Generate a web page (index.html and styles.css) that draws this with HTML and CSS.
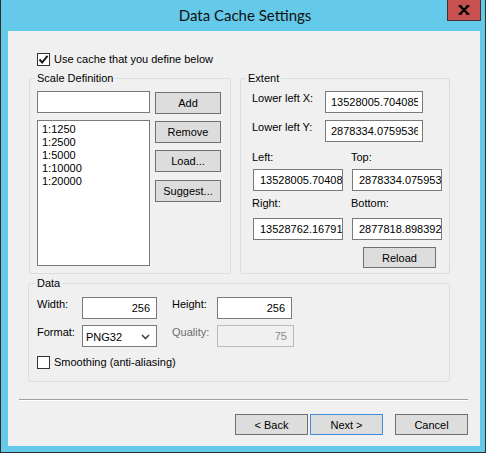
FILE: index.html
```html
<!DOCTYPE html>
<html lang="en">
<head>
    <meta charset="UTF-8">
    <title>Data Cache Settings</title>
    <link rel="stylesheet" href="styles.css">
</head>
<body>
    <div class="window">
        <div class="titlebar">
            <span class="title">Data Cache Settings</span>
            <button class="close-btn" aria-label="Close">
                <svg width="12" height="10" viewBox="0 0 12 10">
                    <path d="M2 1 L10 9 M10 1 L2 9" stroke="#000" stroke-width="2.4" fill="none"/>
                    <path d="M0.5 1 H4 M8 1 H11.5 M0.5 9 H4 M8 9 H11.5" stroke="#000" stroke-width="1.6" fill="none"/>
                </svg>
            </button>
        </div>
        <div class="client">
            <label class="check use-cache">
                <span class="box">
                    <svg width="11" height="11" viewBox="0 0 11 11">
                        <path d="M1.5 5.5 L4.2 8.5 L9.5 1.8" stroke="#1a1a1a" stroke-width="2" fill="none"/>
                    </svg>
                </span>
                Use cache that you define below
            </label>

            <div class="groups">
                <fieldset class="group scale">
                    <legend>Scale Definition</legend>
                    <div class="scale-body">
                        <div class="scale-left">
                            <input class="field scale-input" type="text" value="">
                            <div class="listbox">
                                <div>1:1250</div>
                                <div>1:2500</div>
                                <div>1:5000</div>
                                <div>1:10000</div>
                                <div>1:20000</div>
                            </div>
                        </div>
                        <div class="scale-buttons">
                            <button class="btn">Add</button>
                            <button class="btn">Remove</button>
                            <button class="btn">Load...</button>
                            <button class="btn suggest">Suggest...</button>
                        </div>
                    </div>
                </fieldset>

                <fieldset class="group extent">
                    <legend>Extent</legend>
                    <div class="ext-row">
                        <span class="lbl ext-lbl">Lower left X:</span>
                        <input class="field ext-input" type="text" value="13528005.7040859">
                    </div>
                    <div class="ext-row second">
                        <span class="lbl ext-lbl">Lower left Y:</span>
                        <input class="field ext-input" type="text" value="2878334.07595362">
                    </div>
                    <div class="ext-grid">
                        <span class="lbl">Left:</span>
                        <span class="lbl">Top:</span>
                        <input class="field" type="text" value="13528005.70408">
                        <input class="field" type="text" value="2878334.075953">
                        <span class="lbl lower">Right:</span>
                        <span class="lbl lower">Bottom:</span>
                        <input class="field" type="text" value="13528762.16791">
                        <input class="field" type="text" value="2877818.898392">
                    </div>
                    <div class="reload-row">
                        <button class="btn reload">Reload</button>
                    </div>
                </fieldset>
            </div>

            <fieldset class="group data">
                <legend>Data</legend>
                <div class="data-row">
                    <span class="lbl data-lbl">Width:</span>
                    <input class="field num" type="text" value="256">
                    <span class="lbl data-lbl second-col">Height:</span>
                    <input class="field num" type="text" value="256">
                </div>
                <div class="data-row format-row">
                    <span class="lbl data-lbl">Format:</span>
                    <div class="combo">
                        <span>PNG32</span>
                        <svg width="9" height="6" viewBox="0 0 9 6">
                            <path d="M1 1 L4.5 4.5 L8 1" stroke="#444" stroke-width="1.6" fill="none"/>
                        </svg>
                    </div>
                    <span class="lbl data-lbl second-col disabled">Quality:</span>
                    <input class="field num quality" type="text" value="75" disabled>
                </div>
                <label class="check smoothing">
                    <span class="box"></span>
                    Smoothing (anti-aliasing)
                </label>
            </fieldset>

            <div class="separator"></div>

            <div class="footer">
                <button class="btn nav">&lt; Back</button>
                <button class="btn nav default">Next &gt;</button>
                <button class="btn nav cancel">Cancel</button>
            </div>
        </div>
    </div>
</body>
</html>
```

FILE: styles.css
```css
body {
    margin: 0;
    background-color: #fff;
    font-family: "Liberation Sans", Arial, sans-serif;
    font-size: 11px;
    color: #000;
}

.window {
    width: 486px;
    height: 453px;
    box-sizing: border-box;
    background-color: #65c9ea;
    border: 1px solid #2e2e2e;
    border-top: 0;
    padding: 0 5px 6px 7px;
    display: flex;
    flex-direction: column;
}

.titlebar {
    height: 31px;
    position: relative;
    display: flex;
    justify-content: center;
    align-items: center;
}

.title {
    font-family: Lato, "Noto Sans", sans-serif;
    font-size: 15px;
    color: #111;
    margin-left: 2px;
    margin-top: -1px;
}

.close-btn {
    position: absolute;
    top: 0;
    right: -1px;
    width: 34px;
    height: 21px;
    box-sizing: border-box;
    background-color: #c75050;
    border: 1px solid #3e3434;
    border-top: 0;
    padding: 0;
    display: flex;
    justify-content: center;
    align-items: center;
}

.client {
    flex: 1;
    background-color: #f0f0f0;
    padding-left: 21px;
    display: flex;
    flex-direction: column;
}

.check {
    display: flex;
    align-items: center;
    gap: 4px;
    line-height: 15px;
    height: 15px;
}

.box {
    width: 13px;
    height: 13px;
    box-sizing: border-box;
    border: 1px solid #333;
    background-color: #fff;
    display: flex;
    justify-content: center;
    align-items: center;
}

.use-cache {
    margin-top: 21px;
    margin-left: 8px;
}

.groups {
    display: flex;
    gap: 9px;
    margin-top: 3px;
}

.group {
    margin: 0;
    box-sizing: border-box;
    border: 1px solid #d5dfe5;
    border-radius: 3px;
    min-inline-size: 0;
}

.group legend {
    line-height: 16px;
    padding: 0 2px;
    margin-left: -2px;
}

.scale {
    width: 202px;
    padding: 5px 9px 7px 7px;
}

.scale-body {
    display: flex;
    gap: 5px;
}

.scale-left {
    display: flex;
    flex-direction: column;
    gap: 7px;
}

.field {
    box-sizing: border-box;
    height: 22px;
    border: 1px solid #7a7a7a;
    background-color: #fff;
    font: inherit;
    color: #000;
    padding: 0 4px;
    margin: 0;
    outline: none;
}

.scale-input {
    width: 113px;
}

.listbox {
    width: 113px;
    height: 146px;
    box-sizing: border-box;
    border: 1px solid #7a7a7a;
    background-color: #fff;
    padding: 2px 4px;
    line-height: 13px;
}

.scale-buttons {
    display: flex;
    flex-direction: column;
    gap: 7px;
    padding-top: 1px;
}

.btn {
    box-sizing: border-box;
    width: 66px;
    height: 22px;
    padding: 0;
    background-color: #dddddd;
    border: 1px solid #707070;
    font: inherit;
    color: #000;
}

.suggest {
    margin-top: 1px;
}

.extent {
    width: 210px;
    padding: 5px 0 5px 11px;
}

.extent legend {
    margin-left: -6px;
}

.ext-row {
    display: flex;
    align-items: flex-start;
}

.ext-row.second {
    margin-top: 7px;
}

.ext-lbl {
    width: 73px;
    line-height: 15px;
}

.ext-input {
    width: 98px;
    padding-left: 5px;
}

.ext-grid {
    display: grid;
    grid-template-columns: 90px 90px;
    column-gap: 9px;
    margin-top: 8px;
    margin-left: 1px;
}

.ext-grid .lbl {
    line-height: 15px;
    margin-left: -1px;
    margin-bottom: 4px;
}

.ext-grid .field {
    padding: 0 0 0 6px;
}

.ext-grid .lbl.lower {
    margin-top: 5px;
    margin-bottom: 7px;
}

.reload-row {
    display: flex;
    justify-content: flex-end;
    padding-right: 13px;
    margin-top: 7px;
}

.reload {
    width: 73px;
    height: 21px;
}

.data {
    width: 422px;
    margin-top: 1px;
    margin-left: -1px;
    padding: 6px 0 11px 8px;
}

.data-row {
    display: flex;
    align-items: flex-start;
}

.format-row {
    margin-top: 6px;
}

.data-lbl {
    width: 45px;
    line-height: 15px;
}

.second-col {
    margin-left: 15px;
}

.num {
    width: 75px;
    text-align: right;
    padding-right: 6px;
}

.quality {
    width: 77px;
    border-color: #bcbcbc;
    background-color: #f0f0f0;
    color: #8a8a8a;
}

.disabled {
    color: #6d6d6d;
}

.combo {
    box-sizing: border-box;
    width: 75px;
    height: 22px;
    border: 1px solid #7a7a7a;
    background-color: #fff;
    display: flex;
    align-items: center;
    justify-content: space-between;
    padding: 1px 6px 0 3px;
}

.smoothing {
    margin-top: 8px;
}

.separator {
    margin: 17px 12px 0 -10px;
    border-top: 1px solid #a0a0a0;
    border-bottom: 1px solid #fff;
}

.footer {
    display: flex;
    justify-content: flex-end;
    padding-right: 12px;
    margin-top: 13px;
}

.nav {
    width: 73px;
    height: 21px;
}

.default {
    margin-left: 2px;
    border-color: #3f8ed6;
}

.cancel {
    margin-left: 12px;
}
```
